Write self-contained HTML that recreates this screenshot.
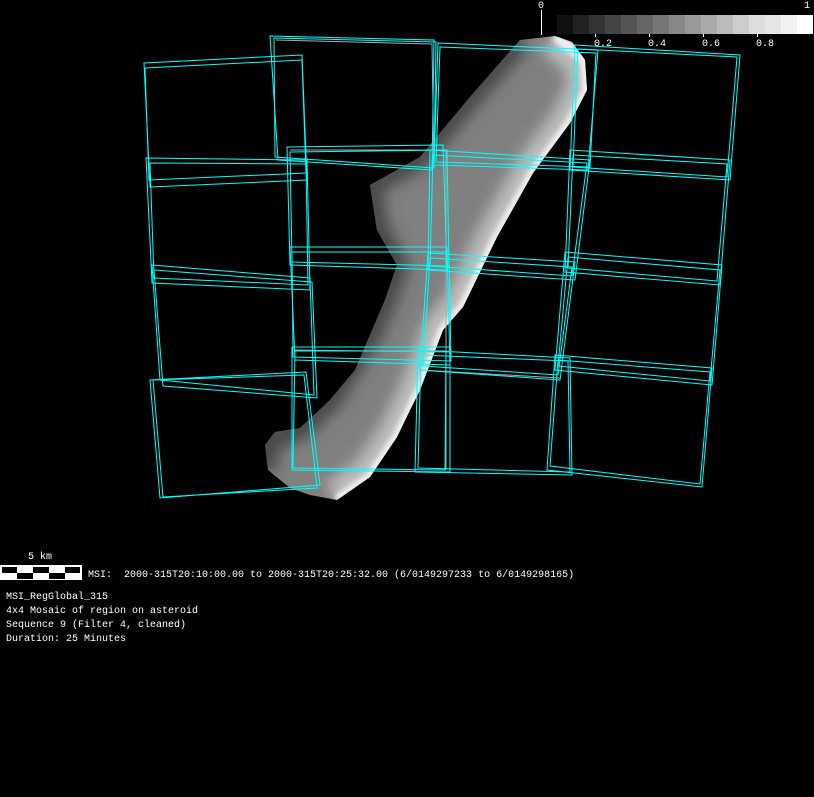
<!DOCTYPE html>
<html><head><style>
html,body{margin:0;padding:0;background:#000;width:814px;height:797px;overflow:hidden;}
svg{position:absolute;left:0;top:0}
.t{position:absolute;font-family:"Liberation Mono",monospace;font-size:10px;color:#fff;white-space:pre;line-height:14px}
</style></head><body>
<svg width="814" height="797">
<defs>
<clipPath id="c"><path d="M520,40 L555,36 L572,42 L585,60 L587,90 L570,123 L533,173 L497,237 L463,307 L443,330 L420,390 L410,410 L397,437 L370,477 L337,500 L310,495 L290,488 L268,470 L265,445 L275,432 L300,428 L330,400 L355,370 L370,335 L385,300 L397,265 L377,230 L370,185 L420,157 L470,97 Z"/></clipPath>
<filter id="b" x="-20%" y="-20%" width="140%" height="140%"><feGaussianBlur stdDeviation="7"/></filter>
<filter id="b2" x="-20%" y="-20%" width="140%" height="140%"><feGaussianBlur stdDeviation="2.5"/></filter>
</defs>
<g clip-path="url(#c)">
<rect x="250" y="30" width="350" height="480" fill="#808080"/>
<g filter="url(#b)">
<path d="M520,40 L470,97 L420,157 L370,185 L377,230 L397,265 L385,300 L370,335 L330,400 L300,428 L268,440 L265,470" fill="none" stroke="#4a4a4a" stroke-width="24"/>
<path d="M555,36 L585,60 L587,90 L570,123 L533,173 L497,237 L463,307 L443,330 L420,390 L397,437 L370,477 L337,500" fill="none" stroke="#bdbdbd" stroke-width="40"/>
</g>
<path filter="url(#b2)" d="M555,36 L585,60 L587,90 L570,123 L533,173 L497,237 L463,307 L443,330 L420,390 L397,437 L370,477 L337,500" fill="none" stroke="#eee" stroke-width="10"/>
</g>
<g fill="none" stroke="#aaa" stroke-width="1">
<path d="M276,40 L432,44 L434,168 M290,150 L446,150 L446,470 M295,350 L450,352 M420,370 L560,378"/>
</g>
<g fill="none" stroke="#0ff" stroke-width="1">
<path d="M144,63 L302,55 L307,180 L150,187 Z"/><path d="M145,68 L302,60 L306,173 L149,180 Z"/>
<path d="M146,158 L307,160 L310,290 L152,283 Z"/><path d="M150,163 L306,164 L308,285 L154,278 Z"/>
<path d="M152,265 L310,278 L314,395 L160,380 Z"/><path d="M154,270 L312,282 L317,398 L163,386 Z"/>
<path d="M150,380 L306,372 L320,485 L160,498 Z"/><path d="M153,380 L304,375 L317,488 L163,497 Z"/>
<path d="M270,36 L434,40 L432,170 L278,160 Z"/><path d="M274,38 L436,42 L434,168 L275,157 Z"/>
<path d="M287,147 L443,145 L447,270 L290,265 Z"/><path d="M290,152 L447,150 L449,266 L292,262 Z"/>
<path d="M290,247 L447,247 L450,365 L295,360 Z"/><path d="M292,252 L449,252 L451,361 L293,357 Z"/>
<path d="M292,347 L450,347 L450,472 L292,470 Z"/><path d="M295,351 L446,351 L445,470 L293,468 Z"/>
<path d="M438,43 L598,50 L588,170 L434,165 Z"/><path d="M440,47 L596,53 L590,167 L436,162 Z"/>
<path d="M430,150 L590,160 L575,280 L428,270 Z"/><path d="M433,155 L587,163 L572,276 L430,266 Z"/>
<path d="M428,253 L575,262 L560,380 L420,370 Z"/><path d="M430,258 L572,267 L558,375 L423,366 Z"/>
<path d="M418,350 L570,358 L572,475 L415,472 Z"/><path d="M421,355 L568,361 L570,472 L418,468 Z"/>
<path d="M575,45 L740,55 L730,180 L570,170 Z"/><path d="M578,49 L737,57 L727,177 L573,167 Z"/>
<path d="M570,150 L730,160 L720,285 L565,272 Z"/><path d="M573,155 L727,164 L717,281 L568,268 Z"/>
<path d="M565,252 L722,265 L712,385 L555,370 Z"/><path d="M568,257 L720,270 L710,381 L558,366 Z"/>
<path d="M555,355 L712,368 L702,487 L547,470 Z"/><path d="M558,360 L710,372 L700,484 L550,466 Z"/>
</g>
<g>
<rect x="557" y="15" width="16" height="19" fill="#111"/><rect x="573" y="15" width="16" height="19" fill="#222"/>
<rect x="589" y="15" width="16" height="19" fill="#333"/><rect x="605" y="15" width="16" height="19" fill="#444"/>
<rect x="621" y="15" width="16" height="19" fill="#555"/><rect x="637" y="15" width="16" height="19" fill="#666"/>
<rect x="653" y="15" width="16" height="19" fill="#777"/><rect x="669" y="15" width="16" height="19" fill="#888"/>
<rect x="685" y="15" width="16" height="19" fill="#999"/><rect x="701" y="15" width="16" height="19" fill="#aaa"/>
<rect x="717" y="15" width="16" height="19" fill="#bbb"/><rect x="733" y="15" width="16" height="19" fill="#ccc"/>
<rect x="749" y="15" width="16" height="19" fill="#ddd"/><rect x="765" y="15" width="16" height="19" fill="#e6e6e6"/>
<rect x="781" y="15" width="16" height="19" fill="#f2f2f2"/><rect x="797" y="15" width="16" height="19" fill="#fff"/>
</g>
<g stroke="#fff" stroke-width="1">
<line x1="541.5" y1="10" x2="541.5" y2="35"/>
<line x1="595.5" y1="34" x2="595.5" y2="37"/><line x1="649.5" y1="34" x2="649.5" y2="37"/>
<line x1="703.5" y1="34" x2="703.5" y2="37"/><line x1="757.5" y1="34" x2="757.5" y2="37"/>
</g>
<rect x="0.5" y="565.5" width="81" height="14" fill="#fff" stroke="#fff"/>
<g fill="#000">
<rect x="2" y="567" width="15" height="6"/><rect x="33" y="567" width="16" height="6"/><rect x="65" y="567" width="15" height="6"/>
<rect x="17" y="573" width="16" height="6"/><rect x="49" y="573" width="16" height="6"/>
</g>
</svg>
<div class="t" style="left:538px;top:0px">0</div>
<div class="t" style="left:804px;top:0px">1</div>
<div class="t" style="left:594px;top:38px">0.2</div>
<div class="t" style="left:648px;top:38px">0.4</div>
<div class="t" style="left:702px;top:38px">0.6</div>
<div class="t" style="left:756px;top:38px">0.8</div>
<div class="t" style="left:28px;top:551px">5 km</div>
<div class="t" style="left:88px;top:569px">MSI:  2000-315T20:10:00.00 to 2000-315T20:25:32.00 (6/0149297233 to 6/0149298165)</div>
<div class="t" style="left:6px;top:591px">MSI_RegGlobal_315
4x4 Mosaic of region on asteroid
Sequence 9 (Filter 4, cleaned)
Duration: 25 Minutes</div>
</body></html>
